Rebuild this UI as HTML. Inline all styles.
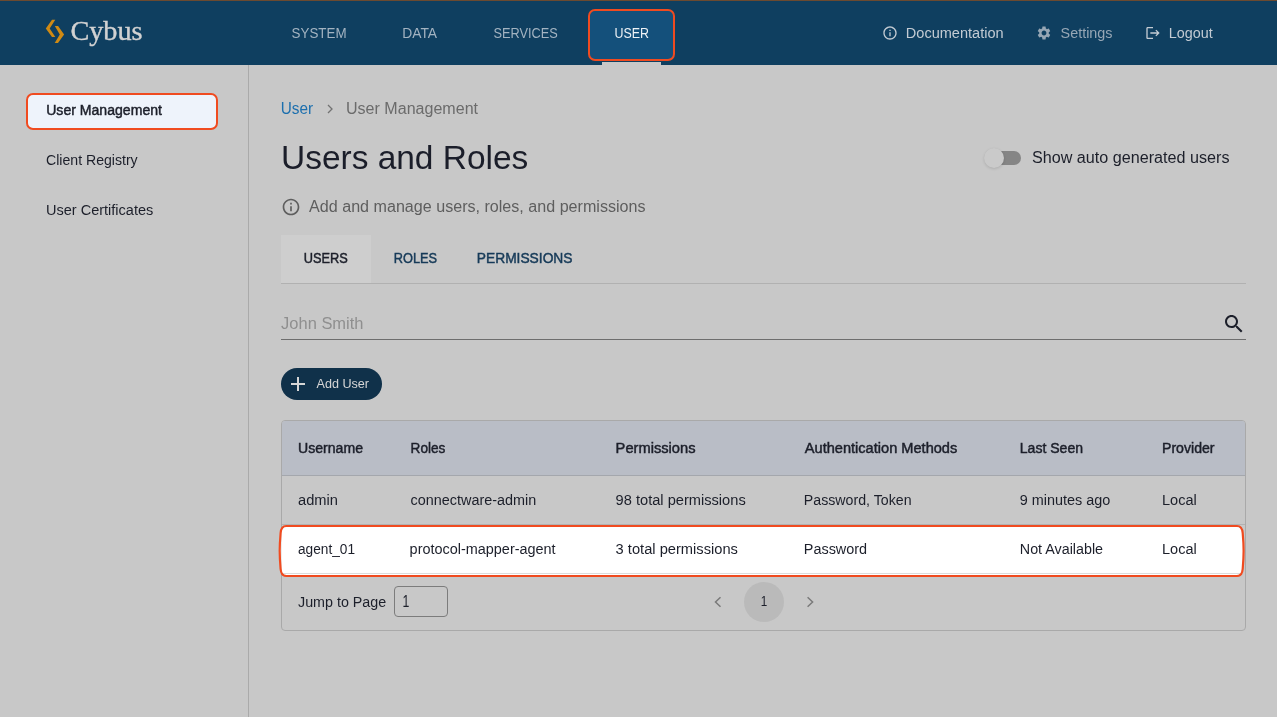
<!DOCTYPE html>
<html lang="en">
<head>
<meta charset="utf-8">
<title>Users and Roles</title>
<style>
*{box-sizing:border-box;margin:0;padding:0}
html,body{width:1277px;height:717px;overflow:hidden}
body{position:relative;background:#c8c8c8;font-family:"Liberation Sans",sans-serif;color:#1c1f2a;font-size:14px}
.abs{position:absolute;white-space:nowrap}
/* top bar */
#topstripe{position:absolute;left:0;top:0;width:1277px;height:1px;background:#6c4a30;z-index:5}
header,aside,main{will-change:transform}
header{position:absolute;left:0;top:0;width:1277px;height:65px;background:#0f3f60}
#logo{position:absolute;left:44px;top:17px;width:22px;height:28px}
#brand{position:absolute;left:70px;top:14px;font-family:"Liberation Serif",serif;font-size:28px;line-height:34px;color:#d2d2d2;white-space:nowrap;-webkit-text-stroke:0.4px #d2d2d2}
nav a{position:absolute;top:23px;height:20px;line-height:20px;font-size:14px;color:#a3b3c1;text-decoration:none;white-space:nowrap;text-transform:uppercase}
#hl-user{position:absolute;left:588px;top:9px;width:87px;height:52px;border:2px solid #f04b20;border-radius:7px;background:#14507b}
#ind{position:absolute;left:602px;top:62px;width:59px;height:3px;background:#c8c8c8}
.hlink{position:absolute;top:23px;height:20px;line-height:20px;font-size:14px;color:#c3cbd3;white-space:nowrap}
.hicon{position:absolute}
/* sidebar */
aside{position:absolute;left:0;top:65px;width:249px;height:652px;border-right:1px solid #aaaaaa}
aside a{position:absolute;left:46px;height:20px;line-height:20px;font-size:14px;color:#1c1f2a;text-decoration:none;white-space:nowrap}
#hl-side{position:absolute;left:26px;top:28px;width:192px;height:37px;border:2px solid #f04b20;border-radius:7px;background:#eef3fb}
/* main */
main{position:absolute;left:249px;top:65px;width:1028px;height:652px}

/* main content */
#crumbs{position:absolute;left:32px;top:33px;height:20px;line-height:20px;font-size:16px;white-space:nowrap}
#crumbs .c1{position:absolute;left:0;color:#1c6fae}
#crumbs .c2{position:absolute;left:65px;color:#6b6b6b}
#crumbs svg{position:absolute;left:45px;top:6px}
h1{position:absolute;left:32px;top:72px;font-size:34px;line-height:40px;font-weight:normal;color:#1b1e2a;white-space:nowrap}
#sub{position:absolute;left:60px;top:131px;height:20px;line-height:20px;font-size:16px;color:#5e5e5e;white-space:nowrap}
#subicon{position:absolute;left:32px;top:132px}
#switch{position:absolute;left:734px;top:82px;width:40px;height:22px}
#switch .track{position:absolute;left:4px;top:4px;width:34px;height:14px;border-radius:7px;background:#858585}
#switch .thumb{position:absolute;left:1px;top:1px;width:20px;height:20px;border-radius:50%;background:#cacaca;box-shadow:0 1px 3px rgba(0,0,0,.13),0 0 1px rgba(0,0,0,.08)}
#swlabel{position:absolute;left:784px;top:82px;height:20px;line-height:20px;font-size:16px;color:#1c1f2a;white-space:nowrap}
#tabs{position:absolute;left:32px;top:170px;width:965px;height:49px;border-bottom:1px solid #b1b1b1}
#tabs div{position:absolute;top:0;height:48px;line-height:48px;font-size:14px;-webkit-text-stroke:0.45px currentColor;color:#163a58;text-align:center;white-space:nowrap}
#tabs .on{background:#cecece;color:#1c1f2a}
#search{position:absolute;left:32px;top:236px;width:965px;height:39px;border-bottom:1px solid #6e6e6e}
#search>span{position:absolute;left:0;top:12px;height:20px;line-height:20px;font-size:16px;color:#8f8f8f;white-space:nowrap}
#search svg{position:absolute;right:0;top:11px}
#add{position:absolute;left:32px;top:303px;width:101px;height:32px;border-radius:16px;background:#10314a;color:#d6d6d6;font-size:13px;line-height:32px;white-space:nowrap}
#add>span{position:absolute;left:35px;top:0}
#add svg{position:absolute;left:5px;top:4px}
/* table */
#card{position:absolute;left:32px;top:355px;width:965px;height:211px;border:1px solid #a9a9a9;border-radius:4px;overflow:hidden}
table{border-collapse:collapse;table-layout:fixed;width:963px;position:absolute;left:0;top:0}
th,td{text-align:left;padding:0 0 0 16px;font-size:14px;white-space:nowrap;overflow:hidden}
th{height:54px;background:#b9bdc6;font-weight:normal;-webkit-text-stroke:0.45px currentColor;color:#1c1f2a;border-bottom:1px solid #a4a7ad}
td{height:49px;color:#1c1f2a;border-bottom:1px solid #b2b2b2}
tr.hl td{border-bottom:1px solid transparent}
#hl-row,#hl-row-bg{position:absolute;left:28px;top:458px}
#foot{position:absolute;left:0;top:153px;width:963px;height:56px}
#foot .jl{position:absolute;left:16px;top:18px;height:20px;line-height:20px;font-size:14px;white-space:nowrap}
#foot .ji{position:absolute;left:112px;top:12px;width:54px;height:31px;border:1px solid #7c7c7c;border-radius:4px;font-size:16px;line-height:29px;padding-left:8px}
#foot .pg{position:absolute;left:462px;top:8px;width:40px;height:40px;border-radius:50%;background:#bababa;text-align:center;line-height:40px;font-size:14px}
#foot svg{position:absolute;top:22px}
.med{-webkit-text-stroke:0.45px currentColor}
.f{display:inline-block;transform-origin:0 0}
#t-SYSTEM{transform:translate(-0.4px,0.0px) scaleX(0.955)}
#t-DATA{transform:translate(-0.8px,0.0px) scaleX(0.989)}
#t-SERVICES{transform:translate(-0.6px,0.0px) scaleX(0.911)}
#t-USER{transform:translate(0.4px,0.0px) scaleX(0.888)}
#t-Documentation{transform:translate(-0.2px,0.0px) scaleX(1.039)}
#t-Settings{transform:translate(0.6px,0.0px) scaleX(1.025)}
#t-Logout{transform:translate(-0.2px,0.0px) scaleX(1.025)}
#t-Cybus{transform:translate(0.4px,0.0px) scaleX(1.009)}
#t-side1{transform:translate(0.2px,-1.0px) scaleX(1.005)}
#t-side2{transform:translate(0.0px,-1.0px) scaleX(1.007)}
#t-side3{transform:translate(0.0px,-1.0px) scaleX(1.037)}
#t-crumbUser{transform:translate(-0.2px,1.0px) scaleX(0.958)}
#t-crumbUM{transform:translate(0.0px,1.0px) scaleX(1.003)}
#t-h1{transform:translate(0.0px,0.0px) scaleX(0.984)}
#t-sub{transform:translate(0.1px,1.0px) scaleX(1.006)}
#t-swlabel{transform:translate(-1.0px,1.0px) scaleX(1.009)}
#t-USERS{transform:translate(1.8px,-1.0px) scaleX(0.913)}
#t-ROLES{transform:translate(1.8px,-1.0px) scaleX(0.913)}
#t-PERMISSIONS{transform:translate(1.8px,-1.0px) scaleX(0.984)}
#t-John{transform:translate(0.1px,1.0px) scaleX(1.029)}
#t-AddUser{transform:translate(0.5px,0.0px) scaleX(0.969)}
#t-thUsername{transform:translate(0.0px,0.0px) scaleX(1.006)}
#t-thRoles{transform:translate(-0.4px,0.0px) scaleX(0.972)}
#t-thPerm{transform:translate(-1.4px,0.0px) scaleX(1.048)}
#t-thAuth{transform:translate(-0.2px,0.0px) scaleX(1.042)}
#t-thLast{transform:translate(-0.2px,0.0px) scaleX(1.003)}
#t-thProv{transform:translate(0.0px,0.0px) scaleX(1.008)}
#t-admin{transform:translate(0.0px,0.0px) scaleX(1.048)}
#t-cwadmin{transform:translate(-0.4px,0.0px) scaleX(1.028)}
#t-98tp{transform:translate(-1.4px,0.0px) scaleX(1.045)}
#t-pwtok{transform:translate(-1.2px,0.0px) scaleX(1.013)}
#t-9min{transform:translate(-0.2px,0.0px) scaleX(1.030)}
#t-local1{transform:translate(0.0px,0.0px) scaleX(1.038)}
#t-agent{transform:translate(0.0px,0.0px) scaleX(0.976)}
#t-pma{transform:translate(-1.4px,0.0px) scaleX(1.031)}
#t-3tp{transform:translate(-1.4px,0.0px) scaleX(1.048)}
#t-pw{transform:translate(-1.2px,0.0px) scaleX(1.030)}
#t-na{transform:translate(-0.2px,0.0px) scaleX(1.022)}
#t-local2{transform:translate(0.0px,0.0px) scaleX(1.037)}
#t-jump{transform:translate(0.0px,0.0px) scaleX(1.021)}
#t-ji1{transform:translate(-0.4px,0.0px) scaleX(0.767)}
#t-pg1{transform:translate(0.8px,-1.0px) scaleX(0.836)}
</style>
</head>
<body>
<header>
  <svg id="logo" viewBox="0 0 22 28"><polygon fill="#cf8a14" points="8,2.8 11.3,2.8 5.7,11.5 11.3,20 8,20 1.8,11.5"/><polygon fill="#cf8a14" points="10.8,9 14.1,9 20.1,17.4 14,25.9 10.7,25.9 15.8,17.4"/></svg>
  <div id="brand"><span class="f" id="t-Cybus">Cybus</span></div>
  <nav>
    <a style="left:292px"><span class="f" id="t-SYSTEM">System</span></a>
    <a style="left:403px"><span class="f" id="t-DATA">Data</span></a>
    <a style="left:494px"><span class="f" id="t-SERVICES">Services</span></a>
    <div id="hl-user"></div>
    <a style="left:614px;color:#eef2f6"><span class="f" id="t-USER">User</span></a>
    <div id="ind"></div>
  </nav>
  <svg class="hicon" style="left:882px;top:25px" width="16" height="16" viewBox="0 0 24 24"><path fill="#c3cbd3" d="M11 7h2v2h-2zm0 4h2v6h-2zm1-9C6.48 2 2 6.48 2 12s4.48 10 10 10 10-4.48 10-10S17.52 2 12 2zm0 18c-4.41 0-8-3.59-8-8s3.59-8 8-8 8 3.59 8 8-3.59 8-8 8z"/></svg>
  <svg class="hicon" style="left:1036px;top:25px" width="16" height="16" viewBox="0 0 24 24"><path fill="#97a7b5" d="M19.14 12.94c.04-.3.06-.61.06-.94 0-.32-.02-.64-.07-.94l2.030-1.580c.18-.14.23-.41.12-.61l-1.920-3.320c-.12-.22-.37-.29-.59-.22l-2.390.96c-.5-.38-1.030-.7-1.620-.94l-.36-2.540c-.04-.24-.24-.41-.48-.41h-3.840c-.24 0-.43.17-.47.41l-.36 2.540c-.59.24-1.130.57-1.620.94l-2.390-.96c-.22-.08-.47 0-.59.22L2.740 8.870c-.12.21-.08.47.12.61l2.030 1.580c-.05.3-.09.63-.09.940s.02.640.07.940l-2.030 1.580c-.18.140-.23.410-.12.610l1.920 3.320c.12.220.37.290.59.220l2.390-.960c.5.380 1.030.700 1.620.940l.36 2.540c.05.240.24.410.48.410h3.840c.24 0 .44-.17.470-.41l.36-2.540c.59-.24 1.130-.56 1.620-.94l2.390.96c.22.08.47 0 .59-.22l1.920-3.320c.12-.22.07-.47-.12-.61l-2.010-1.580zM12 15.600c-1.980 0-3.600-1.620-3.600-3.600s1.620-3.600 3.600-3.600 3.600 1.620 3.600 3.600-1.620 3.600-3.600 3.600z"/></svg>
  <svg class="hicon" style="left:1145px;top:25px" width="16" height="16" viewBox="0 0 24 24"><path fill="#c3cbd3" d="M17 7l-1.410 1.410L18.170 11H8v2h10.170l-2.580 2.580L17 17l5-5zM4 5h8V3H4c-1.100 0-2 .9-2 2v14c0 1.100.9 2 2 2h8v-2H4V5z"/></svg>
  <span class="hlink" style="left:906px"><span class="f" id="t-Documentation">Documentation</span></span>
  <span class="hlink" style="left:1060px;color:#97a7b5"><span class="f" id="t-Settings">Settings</span></span>
  <span class="hlink" style="left:1169px"><span class="f" id="t-Logout">Logout</span></span>
</header>
<div id="topstripe"></div>
<aside>
  <div id="hl-side"></div>
  <a style="top:36px" class="med"><span class="f" id="t-side1">User Management</span></a>
  <a style="top:86px"><span class="f" id="t-side2">Client Registry</span></a>
  <a style="top:136px"><span class="f" id="t-side3">User Certificates</span></a>
</aside>
<main>
  <div id="crumbs"><span class="c1"><span class="f" id="t-crumbUser">User</span></span><svg width="8" height="10" viewBox="0 0 8 10"><path d="M2 1 L6 5 L2 9" fill="none" stroke="#727272" stroke-width="1.3"/></svg><span class="c2"><span class="f" id="t-crumbUM">User Management</span></span></div>
  <h1><span class="f" id="t-h1">Users and Roles</span></h1>
  <div id="switch"><div class="track"></div><div class="thumb"></div></div>
  <div id="swlabel"><span class="f" id="t-swlabel">Show auto generated users</span></div>
  <svg id="subicon" width="20" height="20" viewBox="0 0 24 24"><path fill="#5e5e5e" d="M11 7h2v2h-2zm0 4h2v6h-2zm1-9C6.48 2 2 6.48 2 12s4.48 10 10 10 10-4.48 10-10S17.52 2 12 2zm0 18c-4.41 0-8-3.59-8-8s3.59-8 8-8 8 3.59 8 8-3.59 8-8 8z"/></svg>
  <div id="sub"><span class="f" id="t-sub">Add and manage users, roles, and permissions</span></div>
  <div id="tabs"><div class="on" style="left:0;width:90px"><span class="f" id="t-USERS">USERS</span></div><div style="left:90px;width:90px"><span class="f" id="t-ROLES">ROLES</span></div><div style="left:180px;width:126px"><span class="f" id="t-PERMISSIONS">PERMISSIONS</span></div></div>
  <div id="search"><span><span class="f" id="t-John">John Smith</span></span><svg width="24" height="24" viewBox="0 0 24 24"><path fill="#1c1f2a" d="M15.5 14h-.79l-.28-.27C15.41 12.59 16 11.11 16 9.500 16 5.910 13.090 3 9.500 3S3 5.910 3 9.500 5.910 16 9.500 16c1.610 0 3.090-.59 4.230-1.570l.27.28v.79l5 4.990L20.490 19l-4.990-5zm-6 0C7.010 14 5 11.990 5 9.500S7.010 5 9.500 5 14 7.010 14 9.500 11.990 14 9.500 14z"/></svg></div>
  <div id="add"><svg width="24" height="24" viewBox="0 0 24 24"><path fill="#d6d6d6" d="M19 13h-6v6h-2v-6H5v-2h6V5h2v6h6v2z"/></svg><span><span class="f" id="t-AddUser">Add User</span></span></div>
  <svg id="hl-row-bg" width="970" height="58" viewBox="0 0 970 58"><path d="M9.3,3 H960 C963.6,3 965.3,5.4 965.7,10 C966.3,17 966.6,23 966.6,28 C966.6,33 966.3,39 965.7,46 C965.3,50.6 963.6,53 960,53 H9.3 C5.7,53 4,50.6 3.600,46 C3,39 2.7,33 2.7,28 C2.7,23 3,17 3.600,10 C4,5.4 5.7,3 9.3,3 Z" fill="#ffffff"/><rect x="4" y="50" width="961" height="1" fill="#dcdcdc"/></svg>
  <div id="card">
    <table>
      <colgroup><col style="width:113px"><col style="width:206px"><col style="width:188px"><col style="width:215px"><col style="width:142px"><col></colgroup>
      <thead><tr><th><span class="f" id="t-thUsername">Username</span></th><th><span class="f" id="t-thRoles">Roles</span></th><th><span class="f" id="t-thPerm">Permissions</span></th><th><span class="f" id="t-thAuth">Authentication Methods</span></th><th><span class="f" id="t-thLast">Last Seen</span></th><th><span class="f" id="t-thProv">Provider</span></th></tr></thead>
      <tbody>
        <tr><td><span class="f" id="t-admin">admin</span></td><td><span class="f" id="t-cwadmin">connectware-admin</span></td><td><span class="f" id="t-98tp">98 total permissions</span></td><td><span class="f" id="t-pwtok">Password, Token</span></td><td><span class="f" id="t-9min">9 minutes ago</span></td><td><span class="f" id="t-local1">Local</span></td></tr>
        <tr class="hl"><td><span class="f" id="t-agent">agent_01</span></td><td><span class="f" id="t-pma">protocol-mapper-agent</span></td><td><span class="f" id="t-3tp">3 total permissions</span></td><td><span class="f" id="t-pw">Password</span></td><td><span class="f" id="t-na">Not Available</span></td><td><span class="f" id="t-local2">Local</span></td></tr>
      </tbody>
    </table>
    <div id="foot">
      <span class="jl"><span class="f" id="t-jump">Jump to Page</span></span><div class="ji"><span class="f" id="t-ji1">1</span></div>
      <svg style="left:432px" width="8" height="12" viewBox="0 0 8 12"><path d="M6.5 1.2 L1.5 6 L6.5 10.8" fill="none" stroke="#7a7a7a" stroke-width="1.5"/></svg>
      <div class="pg"><span class="f" id="t-pg1">1</span></div>
      <svg style="left:524px" width="8" height="12" viewBox="0 0 8 12"><path d="M1.600 1.2 L6.600 6 L1.600 10.8" fill="none" stroke="#7a7a7a" stroke-width="1.5"/></svg>
    </div>
  </div>
  <svg id="hl-row" width="970" height="58" viewBox="0 0 970 58"><rect x="4" y="6" width="1" height="44" fill="#ececec"/><path d="M9.3,3 H960 C963.6,3 965.3,5.4 965.7,10 C966.3,17 966.6,23 966.6,28 C966.6,33 966.3,39 965.7,46 C965.3,50.6 963.6,53 960,53 H9.3 C5.7,53 4,50.6 3.600,46 C3,39 2.7,33 2.7,28 C2.7,23 3,17 3.600,10 C4,5.4 5.7,3 9.3,3 Z" fill="none" stroke="#f04b20" stroke-width="2.2"/></svg>
</main>
</body>
</html>
